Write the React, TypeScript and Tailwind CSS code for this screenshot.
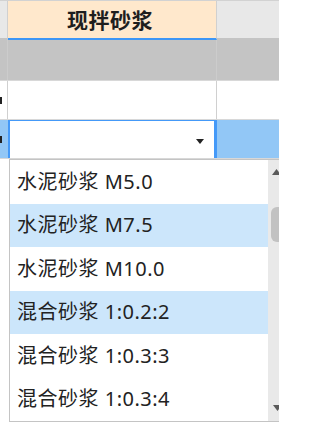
import React from 'react';

const options = [
  { label: '水泥砂浆 M5.0', active: false },
  { label: '水泥砂浆 M7.5', active: true },
  { label: '水泥砂浆 M10.0', active: false },
  { label: '混合砂浆 1:0.2:2', active: true },
  { label: '混合砂浆 1:0.3:3', active: false },
  { label: '混合砂浆 1:0.3:4', active: false },
];

const Caret = ({ up = false }: { up?: boolean }) => (
  <svg width="9" height="6" viewBox="0 0 9 6" className="block">
    {up ? <polygon points="0,6 4.5,0 9,6" fill="#5a5a5a" /> : <polygon points="0,0 9,0 4.5,6" fill="#5a5a5a" />}
  </svg>
);

export default function App() {
  return (
    <div className="relative w-[279px] h-[443px] overflow-hidden bg-white font-['Noto_Sans','Noto_Sans_CJK_SC',sans-serif] text-[#222]">
      <div className="border-t border-[#d2d2d2]">
        {/* header */}
        <div className="grid grid-cols-[8px_209px_1fr] h-[39px]">
          <div className="bg-[#e8e8e8] border-r border-[#d0d0d0] border-b-2 border-b-[#c4c4c4]" />
          <div className="bg-[#ffe8cc] border-r border-[#d0d0d0] border-b-2 border-b-[#3d96f6] flex items-center justify-center pr-[4px]">
            <span className="text-[21px] font-bold leading-none tracking-[0.5px] font-['Noto_Sans_CJK_SC',sans-serif] text-[#1e1e1e]">现拌砂浆</span>
          </div>
          <div className="bg-[#e8e8e8] border-b-2 border-[#c4c4c4]" />
        </div>

        {/* group row */}
        <div className="grid grid-cols-[8px_209px_1fr] h-[41px] bg-[#c4c4c4] border-b border-[#d8d8d8]">
          <div className="border-r border-[#cccccc]" />
          <div className="border-r border-[#cccccc]" />
          <div />
        </div>

        {/* plain row */}
        <div className="grid grid-cols-[8px_209px_1fr] h-[39px] border-b border-[#d8d8d8]">
          <div className="border-r border-[#d0d0d0] flex items-center">
            <div className="w-[2px] h-[7px] bg-[#222]" />
          </div>
          <div className="border-r border-[#d0d0d0]" />
          <div />
        </div>

        {/* selected row */}
        <div className="grid grid-cols-[8px_209px_1fr] h-[39px] border-b border-[#d8d8d8]">
          <div className="bg-[#92c7f6] flex items-center">
            <div className="w-[2px] h-[7px] bg-[#222]" />
          </div>
          <div className="bg-white border-l-2 border-t border-r-[3px] border-[#4499f8] flex items-center justify-end pr-[10px] pt-[4px]">
            <svg width="8" height="5" viewBox="0 0 8 5" className="block">
              <polygon points="0,0 8,0 4,5" fill="#222" />
            </svg>
          </div>
          <div className="bg-[#92c7f6]" />
        </div>
      </div>

      {/* dropdown list */}
      <div className="absolute left-[9px] top-[159px] w-[280px] h-[263px] flex border border-[#c4c4c4] bg-white">
        <div className="w-[258px] flex flex-col">
          {options.map((o) => (
            <div
              key={o.label}
              className={`h-[43.5px] flex items-center pl-[7px] text-[20px] leading-none tracking-[0.5px] whitespace-nowrap ${o.active ? 'bg-[#cce6fb]' : 'bg-white'}`}
            >
              {o.label}
            </div>
          ))}
        </div>
        <div className="flex-1 bg-[#e9e9e9] flex flex-col pl-[4px] pt-[9px] pb-[10px]">
          <Caret up />
          <div className="mt-[32px] h-[35px] w-[14px] -ml-[1px] rounded-[6px] bg-[#c2c2c2]" />
          <div className="flex-1" />
          <div className="pl-[1px]">
            <Caret />
          </div>
        </div>
      </div>
    </div>
  );
}
